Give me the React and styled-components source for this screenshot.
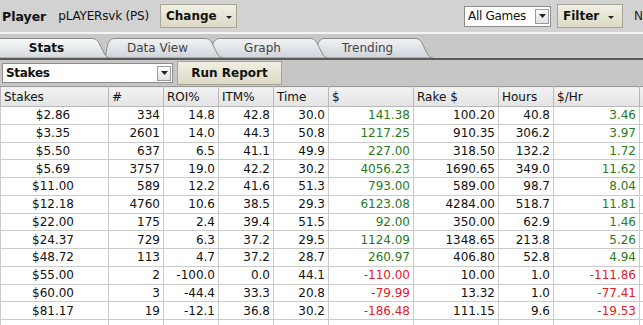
import React from "react";
import styled, { createGlobalStyle } from "styled-components";

const GlobalStyle = createGlobalStyle`
  html, body {
    margin: 0;
    padding: 0;
    background: #c6c6c6;
    overflow: hidden;
  }
  body {
    font-family: "DejaVu Sans", Verdana, sans-serif;
    font-size: 12px;
    color: #111;
  }
`;

const rows = [
  ["$2.86", "334", "14.8", "42.8", "30.0", "141.38", "100.20", "40.8", "3.46"],
  ["$3.35", "2601", "14.0", "44.3", "50.8", "1217.25", "910.35", "306.2", "3.97"],
  ["$5.50", "637", "6.5", "41.1", "49.9", "227.00", "318.50", "132.2", "1.72"],
  ["$5.69", "3757", "19.0", "42.2", "30.2", "4056.23", "1690.65", "349.0", "11.62"],
  ["$11.00", "589", "12.2", "41.6", "51.3", "793.00", "589.00", "98.7", "8.04"],
  ["$12.18", "4760", "10.6", "38.5", "29.3", "6123.08", "4284.00", "518.7", "11.81"],
  ["$22.00", "175", "2.4", "39.4", "51.5", "92.00", "350.00", "62.9", "1.46"],
  ["$24.37", "729", "6.3", "37.2", "29.5", "1124.09", "1348.65", "213.8", "5.26"],
  ["$48.72", "113", "4.7", "37.2", "28.7", "260.97", "406.80", "52.8", "4.94"],
  ["$55.00", "2", "-100.0", "0.0", "44.1", "-110.00", "10.00", "1.0", "-111.86"],
  ["$60.00", "3", "-44.4", "33.3", "20.8", "-79.99", "13.32", "1.0", "-77.41"],
  ["$81.17", "19", "-12.1", "36.8", "30.2", "-186.48", "111.15", "9.6", "-19.53"],
];

const columns = [
  { title: "Stakes", width: 108 },
  { title: "#", width: 55 },
  { title: "ROI%", width: 55 },
  { title: "ITM%", width: 55 },
  { title: "Time", width: 55 },
  { title: "$", width: 85 },
  { title: "Rake $", width: 85 },
  { title: "Hours", width: 55 },
  { title: "$/Hr", width: 86 },
  { title: "", width: 60 },
];

const tabs = ["Stats", "Data View", "Graph", "Trending"];

const Page = styled.div`
  width: 643px;
  height: 325px;
  display: flex;
  flex-direction: column;
  overflow: hidden;
`;

const TopBar = styled.div`
  height: 34px;
  display: flex;
  align-items: center;
  background: #d2d2d2;
  border-bottom: 2px solid #f4f4f4;
  padding-left: 2px;
  box-sizing: border-box;
`;

const PlayerLabel = styled.span`
  font-weight: bold;
  font-size: 12.5px;
  margin-right: 12px;
`;

const PlayerName = styled.span`
  margin-right: 11px;
  letter-spacing: -0.2px;
`;

const Button = styled.div`
  height: 24px;
  box-sizing: border-box;
  width: ${(p) => p.$w}px;
  display: flex;
  align-items: center;
  justify-content: ${(p) => (p.$center ? "center" : "flex-start")};
  padding-left: ${(p) => (p.$center ? 0 : 5)}px;
  font-weight: bold;
  color: #111;
  background: linear-gradient(#f0efe2, #dcdac6);
  border: 1px solid #a7a696;
  gap: 9px;
`;

const Caret = styled.span`
  width: 0;
  height: 0;
  border-left: 3px solid transparent;
  border-right: 3px solid transparent;
  border-top: 3px solid #222;
  margin-top: 2px;
`;

const Spacer = styled.div`
  flex: 1;
`;

const Select = styled.div`
  width: ${(p) => p.$w}px;
  height: ${(p) => p.$h}px;
  box-sizing: border-box;
  display: flex;
  align-items: center;
  background: #fff;
  border: 1px solid #8d8d8d;
  padding: 0 1px 0 3px;
  font-weight: ${(p) => (p.$bold ? "bold" : "normal")};
  margin-right: ${(p) => p.$mr || 0}px;
`;

const SelectText = styled.span`
  flex: 1;
  letter-spacing: -0.3px;
`;

const SelectArrow = styled.span`
  width: 14px;
  height: 15px;
  box-sizing: border-box;
  border: 1px solid #9a9a9a;
  background: linear-gradient(#fafafa, #e2e2e2);
  display: flex;
  align-items: center;
  justify-content: center;
`;

const RightText = styled.span`
  margin-left: 11px;
  color: #222;
`;

const TabBar = styled.div`
  height: 26px;
  display: flex;
  align-items: flex-end;
  background: #c8c8c8;
  border-bottom: 2px solid #5a5a5a;
  box-sizing: border-box;
  padding-top: 3px;
`;

const Tab = styled.div`
  position: relative;
  width: 105px;
  height: 21px;
  flex-shrink: 0;
  display: flex;
  align-items: center;
  justify-content: center;
  font-weight: ${(p) => (p.$active ? "bold" : "normal")};
  color: ${(p) => (p.$active ? "#111" : "#444")};
  padding-right: ${(p) => (p.$active ? 12 : 0)}px;
  box-sizing: border-box;
  z-index: ${(p) => p.$z};
`;

const TabShape = styled.svg`
  position: absolute;
  left: ${(p) => (p.$first ? -8 : 0)}px;
  top: 0;
  z-index: -1;
`;

const TabLabel = styled.span`
  position: relative;
`;

const Toolbar = styled.div`
  height: 26px;
  display: flex;
  align-items: center;
  background: #c6c6c6;
  padding-left: 2px;
  gap: 4px;
  box-sizing: border-box;
`;

const TableWrap = styled.div`
  flex: 1;
  background: #fff;
  overflow: hidden;
`;

const Table = styled.table`
  border-collapse: collapse;
  table-layout: fixed;
  width: 644px;
`;

const HeadCell = styled.th`
  height: 19px;
  padding: 0 0 0 3px;
  text-align: left;
  font-weight: normal;
  background: linear-gradient(#f2f2f2, #e4e4e4);
  border: 1px solid #b8b8b8;
  border-top-color: #9a9a9a;
  white-space: nowrap;
  overflow: hidden;
`;

const Cell = styled.td`
  height: 16.75px;
  padding: 0 3px 0 0;
  text-align: ${(p) => (p.$center ? "center" : "right")};
  color: ${(p) => (p.$tone === "pos" ? "#2a7a22" : p.$tone === "neg" ? "#e0202a" : "#111")};
  border: 1px solid #cbcbcb;
  white-space: nowrap;
  overflow: hidden;
`;

const tone = (v) => (v.startsWith("-") ? "neg" : "pos");

const ArrowIcon = () => (
  <svg width="7" height="4" viewBox="0 0 7 4">
    <path d="M0 0h7L3.5 4z" fill="#222" />
  </svg>
);

const TabOutline = ({ first, active }) => (
  <TabShape $first={first} width="124" height="21" viewBox="0 0 124 21">
    <defs>
      <linearGradient id={active ? "tga" : "tgi"} x1="0" y1="0" x2="0" y2="1">
        <stop offset="0" stopColor={active ? "#fbfbfb" : "#f2f3f4"} />
        <stop offset="0.55" stopColor={active ? "#e6e8ea" : "#dfe2e6"} />
        <stop offset="1" stopColor={active ? "#d4d8dc" : "#cfd3d8"} />
      </linearGradient>
    </defs>
    <path
      d="M0.5 21 C2 6 4 1.5 10 1.5 H100 C104 1.5 105 3 107 6 L112 16 C114 19.5 115 20.5 118 21 Z"
      fill={`url(#${active ? "tga" : "tgi"})`}
      stroke="#8a8a8a"
      strokeWidth="1"
    />
  </TabShape>
);

export default function App() {
  return (
    <Page>
      <GlobalStyle />
      <TopBar>
        <PlayerLabel>Player</PlayerLabel>
        <PlayerName>pLAYERsvk (PS)</PlayerName>
        <Button $w={77}>
          Change <Caret />
        </Button>
        <Spacer />
        <Select $w={87} $h={21} $mr={6}>
          <SelectText>All Games</SelectText>
          <SelectArrow>
            <ArrowIcon />
          </SelectArrow>
        </Select>
        <Button $w={66}>
          Filter <Caret />
        </Button>
        <RightText>N</RightText>
      </TopBar>
      <TabBar>
        {tabs.map((t, i) => (
          <Tab key={t} $active={i === 0} $z={10 - i}>
            <TabOutline first={i === 0} active={i === 0} />
            <TabLabel>{t}</TabLabel>
          </Tab>
        ))}
      </TabBar>
      <Toolbar>
        <Select $w={171} $h={20} $bold>
          <SelectText>Stakes</SelectText>
          <SelectArrow>
            <ArrowIcon />
          </SelectArrow>
        </Select>
        <Button $w={105} $center>
          Run Report
        </Button>
      </Toolbar>
      <TableWrap>
        <Table>
          <colgroup>
            {columns.map((c, i) => (
              <col key={i} style={{ width: c.width }} />
            ))}
          </colgroup>
          <thead>
            <tr>
              {columns.map((c, i) => (
                <HeadCell key={i}>{c.title}</HeadCell>
              ))}
            </tr>
          </thead>
          <tbody>
            {rows.map((r) => (
              <tr key={r[0]}>
                {r.map((v, i) => (
                  <Cell
                    key={i}
                    $center={i === 0}
                    $tone={i === 5 || i === 8 ? tone(v) : null}
                  >
                    {v}
                  </Cell>
                ))}
                <Cell />
              </tr>
            ))}
            <tr>
              {columns.map((c, i) => (
                <Cell key={i} />
              ))}
            </tr>
          </tbody>
        </Table>
      </TableWrap>
    </Page>
  );
}
